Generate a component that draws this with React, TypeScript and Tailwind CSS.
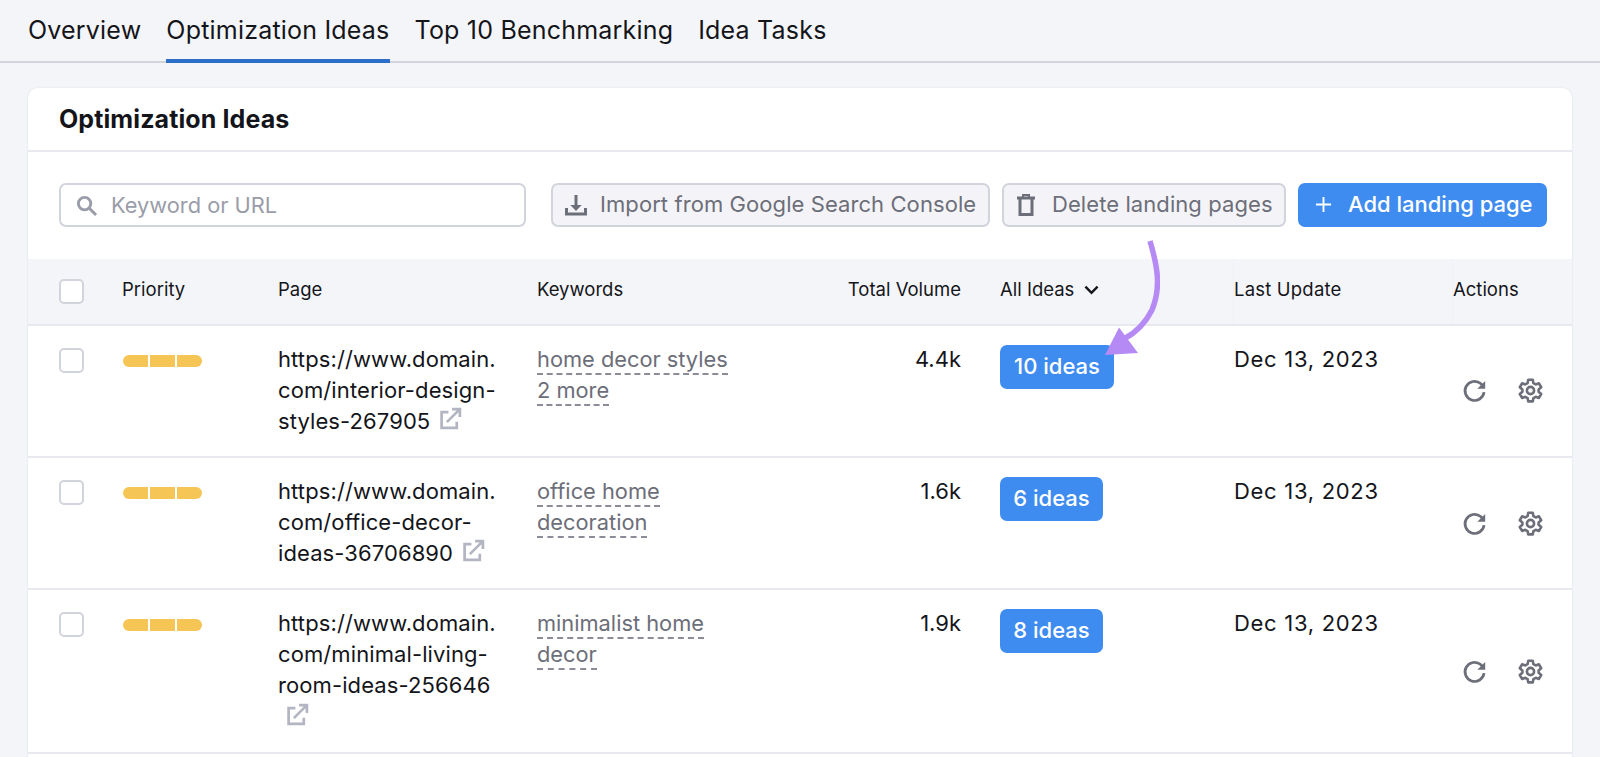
import { Fragment } from 'react'

const rows = [
  { lines: ['https://www.domain.', 'com/interior-design-', 'styles-267905'], kw: ['home decor styles', '2 more'], vol: '4.4k', ideas: '10 ideas', h: 'h-[132px]', btn: 'w-[114px]', actions: 'mt-[51px]', wrapIcon: false },
  { lines: ['https://www.domain.', 'com/office-decor-', 'ideas-36706890'], kw: ['office home', 'decoration'], vol: '1.6k', ideas: '6 ideas', h: 'h-[132px]', btn: 'w-[103px]', actions: 'mt-[52px]', wrapIcon: false },
  { lines: ['https://www.domain.', 'com/minimal-living-', 'room-ideas-256646'], kw: ['minimalist home', 'decor'], vol: '1.9k', ideas: '8 ideas', h: 'h-[164px]', btn: 'w-[103px]', actions: 'mt-[68px]', wrapIcon: true },
]

function ExternalIcon({ className }: { className: string }) {
  return (
    <svg viewBox="0 0 22 22" className={className} fill="none" stroke="#b3b6c2" strokeWidth="2.6">
      <path d="M9 5H2.500v15H17v-6" />
      <path d="M7.500 14.500 19 3M12.500 2H20v7.500" />
    </svg>
  )
}

function RefreshIcon() {
  return (
    <svg viewBox="0 0 24 24" className="w-[27px] h-[27px]" fill="none" stroke="#6c6e79" strokeWidth="2.4">
      <path d="M20.500 13.500a8.500 8.500 0 1 1-3-7.700L20 8.500" />
      <path d="M21.500 3.500V10.500h-7z" fill="#6c6e79" stroke="none" />
    </svg>
  )
}

function GearIcon() {
  return (
    <svg viewBox="0 0 24 24" className="w-[27px] h-[27px]" fill="none" stroke="#6c6e79" strokeWidth="2.3" strokeLinejoin="round">
      <path d="M10 2.500h4l.6 3 2 1.100 2.900-1 2 3.500-2.300 2v2l2.300 2-2 3.500-2.900-1-2 1.100-.6 3h-4l-.6-3-2-1.100-2.900 1-2-3.500 2.300-2v-2l-2.300-2 2-3.500 2.900 1 2-1.100z" />
      <circle cx="12" cy="12" r="3.200" />
    </svg>
  )
}

function Checkbox() {
  return <div className="w-[25px] h-[25px] rounded-[5px] border-2 border-[#d1d4db] bg-white" />
}

function Priority() {
  return (
    <div className="flex gap-[2px] w-[79px] h-3 ml-[1px]">
      <div className="flex-1 bg-[#f5c556] rounded-l-full" />
      <div className="flex-1 bg-[#f5c556]" />
      <div className="flex-1 bg-[#f5c556] rounded-r-full" />
    </div>
  )
}

const gridCols = 'grid grid-cols-[94px_156px_259px_201px_223px_272px_219px_1fr]'

export default function App() {
  return (
    <div className="h-[757px] overflow-hidden bg-[#f4f5f9] font-['Inter',sans-serif] text-[#14151a]">
      <div className="h-[63px] border-b-2 border-[#d1d4db] pl-7 flex gap-[25px] text-[25px] tracking-[0.2px]">
        <a className="pt-3 h-[63px]">Overview</a>
        <a className="pt-3 h-[63px] border-b-4 border-[#2b6fc9]">Optimization Ideas</a>
        <a className="pt-3 h-[63px]">Top 10 Benchmarking</a>
        <a className="pt-3 h-[63px]">Idea Tasks</a>
      </div>

      <div className="relative mt-[25px] ml-[28px] w-[1544px] h-[700px] bg-white rounded-t-[10px] shadow-[0_0_3px_rgba(0,0,0,0.08)]">
        <div className="h-[64px] border-b-2 border-[#e8e9ef] pl-[31px] pt-[15px] text-[25px] font-bold leading-8 tracking-[0.1px]">
          Optimization Ideas
        </div>

        <div className="flex items-center h-[107px] pl-[31px] pb-[2px] text-[22px]">
          <div className="w-[467px] h-[44px] border-2 border-[#d1d4db] rounded-[7px] flex items-center pl-[14px] gap-[13px] text-[#9a9ca9] text-[21.800px] pt-[1px]">
            <svg viewBox="0 0 24 24" className="w-[23px] h-[23px]" fill="none" stroke="#9a9ca9" strokeWidth="3">
              <circle cx="10" cy="10" r="6.500" />
              <path d="m15 15 7 7" />
            </svg>
            Keyword or URL
          </div>
          <div className="ml-[25px] w-[439px] h-[44px] bg-[#f4f4f8] border-2 border-[#d1d4db] rounded-[7px] flex items-center pl-[11px] gap-[12px] text-[#6c6e79] tracking-[0.08px] whitespace-nowrap">
            <svg viewBox="0 0 24 24" className="w-[24px] h-[24px]" fill="#6c6e79">
              <path d="M10.500 2h3v10h4.200L12 18l-5.700-6h4.200z" />
              <path d="M1 15h3v4.500h16V15h3v7.500H1z" />
            </svg>
            Import from Google Search Console
          </div>
          <div className="ml-[12px] w-[284px] h-[44px] bg-[#f4f4f8] border-2 border-[#d1d4db] rounded-[7px] flex items-center pl-[10px] gap-[14px] text-[#6c6e79] tracking-[0.08px] whitespace-nowrap">
            <svg viewBox="0 0 24 24" className="w-[24px] h-[24px]" fill="none" stroke="#6c6e79" strokeWidth="3">
              <path d="M3 5h18" />
              <path d="M9 5V2h6v3" strokeWidth="2" />
              <path d="M6 5.500v16h12v-16" />
            </svg>
            Delete landing pages
          </div>
          <div className="ml-[12px] w-[249px] h-[44px] bg-[#3f8cf0] rounded-[7px] flex items-center pl-[17px] gap-[16px] text-white font-[450] whitespace-nowrap">
            <svg viewBox="0 0 18 18" className="w-[17px] h-[17px]" fill="none" stroke="white" strokeWidth="2">
              <path d="M9 1v16M1 9h16" />
            </svg>
            Add landing page
          </div>
        </div>

        <div className={`${gridCols} h-[67px] bg-[#f4f5f9] border-b-2 border-[#e8e9ef] text-[18.500px] items-center`}>
          <div className="pl-[31px]"><Checkbox /></div>
          <div className="pb-[3px]">Priority</div>
          <div className="pb-[3px]">Page</div>
          <div className="pb-[3px]">Keywords</div>
          <div className="pb-[3px] text-right whitespace-nowrap">Total Volume</div>
          <div className="pb-[3px] pl-[39px] flex items-center gap-[10px]">
            All Ideas
            <svg viewBox="0 0 16 10" className="w-[15px] h-[10px]" fill="none" stroke="#14151a" strokeWidth="2.600">
              <path d="m1.500 1.500 6.500 6.500 6.500-6.500" />
            </svg>
          </div>
          <div className="self-stretch flex items-center pb-[3px] border-l border-[#f0f1f6] tracking-[0.2px]">Last Update</div>
          <div className="self-stretch flex items-center pb-[3px] border-l border-[#f0f1f6]">Actions</div>
        </div>

        {rows.map((r) => (
          <div key={r.ideas} className={`${gridCols} ${r.h} border-b-2 border-[#e8e9ef] text-[22px] leading-[31px]`}>
            <div className="pl-[31px] pt-[22px]"><Checkbox /></div>
            <div className="pt-[29px]"><Priority /></div>
            <div className="pt-[18px] whitespace-nowrap tracking-[0.1px]">
              {r.lines.map((l, i) => (
                <Fragment key={l}>
                  {l}
                  {i === 2 && !r.wrapIcon && <ExternalIcon className="inline-block w-[23px] h-[23px] ml-[9px] -my-2 align-[7px]" />}
                  <br />
                </Fragment>
              ))}
              {r.wrapIcon && <ExternalIcon className="block w-[23px] h-[23px] ml-[8px] mt-[2px]" />}
            </div>
            <div className="pt-[18px] text-[#6c6e79] whitespace-nowrap text-[21.800px]">
              {r.kw.map((k) => (
                <Fragment key={k}>
                  <span className="border-b-2 border-dashed border-[#8a8c98] pb-[1px]">{k}</span>
                  <br />
                </Fragment>
              ))}
            </div>
            <div className="pt-[18px] text-right">{r.vol}</div>
            <div className="pt-[18.500px] pl-[39px]">
              <div className={`${r.btn} h-[44px] bg-[#3f8cf0] rounded-[7px] text-white font-medium flex items-center justify-center`}>
                {r.ideas}
              </div>
            </div>
            <div className="pt-[18px] pl-[1px] tracking-[0.7px] whitespace-nowrap">Dec 13, 2023</div>
            <div className={`${r.actions} pl-[9px] flex gap-[29px] h-[27px]`}>
              <RefreshIcon />
              <GearIcon />
            </div>
          </div>
        ))}

        <svg viewBox="0 0 60 130" className="absolute left-[1072px] top-[150px] w-[60px] h-[130px] pointer-events-none" fill="none">
          <path d="M50 3C58 30 61 50 52 72C45 86 35 95 24 101" stroke="#b58af5" strokeWidth="5.500" />
          <path d="M5 117L19 89.500L38 115Z" fill="#b58af5" />
        </svg>
      </div>
    </div>
  )
}
